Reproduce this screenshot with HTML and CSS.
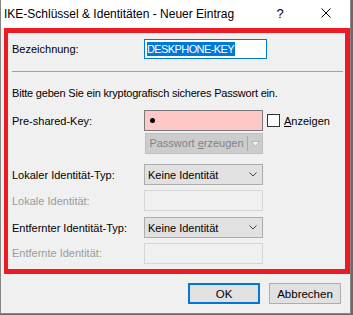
FILE: index.html
```html
<!DOCTYPE html>
<html lang="de">
<head>
    <meta charset="UTF-8">
    <title>IKE-Schlüssel &amp; Identitäten - Neuer Eintrag</title>
    <link rel="stylesheet" href="styles.css">
</head>
<body>
    <div class="window">
        <div class="titlebar">
            <span class="title">IKE-Schlüssel &amp; Identitäten - Neuer Eintrag</span>
            <span class="caption-btn help">?</span>
            <span class="caption-btn close">
                <svg width="10" height="10" viewBox="0 0 10 10"><path d="M0.5 0.5 L9.5 9.5 M9.5 0.5 L0.5 9.5" stroke="#000" stroke-width="1" fill="none"/></svg>
            </span>
        </div>
        <div class="client">
            <div class="frame">
                <div class="row row-name">
                    <span class="label">Bezeichnung:</span>
                    <div class="edit edit-focus"><span class="selected">DESKPHONE-KEY</span></div>
                </div>
                <div class="separator"></div>
                <p class="hint">Bitte geben Sie ein kryptografisch sicheres Passwort ein.</p>
                <div class="row row-key">
                    <span class="label">Pre-shared-Key:</span>
                    <div class="edit edit-pink"><span class="dot"></span></div>
                    <span class="checkbox"></span>
                    <span class="check-label"><u>A</u>nzeigen</span>
                </div>
                <div class="row row-gen">
                    <span class="label"></span>
                    <div class="split-btn">
                        <span class="split-text">Passwort <u>e</u>rzeugen</span>
                        <span class="split-arrow">
                            <svg width="9" height="6" viewBox="0 0 9 6"><path d="M0.5 0.5 L8.5 0.5 L4.5 5.5 Z" fill="#f2f2f2" stroke="#b8b8b8" stroke-width="1"/></svg>
                        </span>
                    </div>
                </div>
                <div class="row row-combo">
                    <span class="label">Lokaler Identität-Typ:</span>
                    <div class="combo">
                        <span>Keine Identität</span>
                        <svg width="8" height="5" viewBox="0 0 8 5"><path d="M0.5 0.5 L4 4 L7.5 0.5" stroke="#444" stroke-width="1" fill="none"/></svg>
                    </div>
                </div>
                <div class="row row-disabled">
                    <span class="label disabled">Lokale Identität:</span>
                    <div class="edit edit-disabled"></div>
                </div>
                <div class="row row-combo">
                    <span class="label">Entfernter Identität-Typ:</span>
                    <div class="combo">
                        <span>Keine Identität</span>
                        <svg width="8" height="5" viewBox="0 0 8 5"><path d="M0.5 0.5 L4 4 L7.5 0.5" stroke="#444" stroke-width="1" fill="none"/></svg>
                    </div>
                </div>
                <div class="row row-disabled row-last">
                    <span class="label disabled">Entfernte Identität:</span>
                    <div class="edit edit-disabled"></div>
                </div>
            </div>
            <div class="buttons">
                <button class="button button-default">OK</button>
                <button class="button">Abbrechen</button>
            </div>
        </div>
    </div>
</body>
</html>
```

FILE: styles.css
```css
body {
    margin: 0;
    padding: 0;
    background-color: #6b6b6b;
    font-family: "Liberation Sans", Arial, sans-serif;
    font-size: 11px;
    color: #000;
}

.window {
    width: 349px;
    height: 313px;
    border: 1px solid #858585;
    border-top: none;
    background-color: #f0f0f0;
    display: flex;
    flex-direction: column;
}

.titlebar {
    height: 28px;
    background-color: #fff;
    display: flex;
    align-items: center;
}

.title {
    flex: 1;
    padding-left: 3px;
    font-size: 12px;
    padding-bottom: 1px;
}

.caption-btn {
    display: flex;
    justify-content: center;
    align-items: center;
    height: 28px;
}

.help {
    width: 46px;
    font-size: 13px;
    padding-bottom: 2px;
    box-sizing: border-box;
}

.close {
    width: 45px;
    margin-right: 2px;
    padding-bottom: 3px;
    box-sizing: border-box;
}

.client {
    flex: 1;
    display: flex;
    flex-direction: column;
}

/* red annotation frame */
.frame {
    margin-left: 3px;
    width: 333px;
    height: 235px;
    border: 5px solid #ed1c24;
    border-left-width: 4px;
    display: flex;
    flex-direction: column;
    padding-left: 4px;
    padding-top: 1px;
}

.row {
    display: flex;
    align-items: center;
}

.label {
    width: 132px;
    flex-shrink: 0;
    white-space: nowrap;
}

.label.disabled {
    color: #9b9b9b;
}

.row-name {
    margin-top: 5px;
}

.edit {
    box-sizing: border-box;
    width: 119px;
    height: 20px;
    border: 1px solid #7a7a7a;
    background-color: #fff;
    display: flex;
    align-items: center;
}

.edit-focus {
    width: 123px;
    border-color: #0078d7;
    padding-left: 2px;
}

.selected {
    background-color: #0078d7;
    color: #fff;
    font-size: 11px;
    letter-spacing: -0.6px;
    line-height: 14px;
    padding-right: 1px;
}

.separator {
    height: 1px;
    background-color: #a0a0a0;
    margin: 12px 2px 0 0;
}

.hint {
    margin: 14px 0 0;
    line-height: 14px;
    letter-spacing: -0.2px;
}

.row-key {
    margin-top: 10px;
}

.edit-pink {
    height: 21px;
    background-color: #ffc8c8;
    padding-left: 5px;
}

.dot {
    width: 5px;
    height: 5px;
    border-radius: 50%;
    background-color: #000;
}

.checkbox {
    width: 11px;
    height: 11px;
    border: 1px solid #333;
    background-color: #fff;
    margin-left: 4px;
}

.check-label {
    margin-left: 4px;
}

.row-gen {
    margin-top: 2px;
}

.split-btn {
    box-sizing: border-box;
    width: 118px;
    height: 21px;
    margin-left: 1px;
    background-color: #cccccc;
    border: 1px solid #bfbfbf;
    color: #838383;
    display: flex;
    align-items: center;
}

.split-text {
    flex: 1;
    text-align: center;
    white-space: nowrap;
    border-right: 1px solid #a8a8a8;
    line-height: 15px;
}

.split-arrow {
    width: 14px;
    display: flex;
    justify-content: center;
}

.row-combo {
    margin-top: 10px;
}

.row-combo + .row-disabled {
    margin-top: 5px;
}

.row-disabled + .row-combo {
    margin-top: 6px;
}

.combo {
    box-sizing: border-box;
    width: 119px;
    height: 21px;
    background-color: #e1e1e1;
    border: 1px solid #adadad;
    display: flex;
    align-items: center;
    justify-content: space-between;
    padding: 0 5px 0 3px;
}

.edit-disabled {
    height: 21px;
    background-color: #f0f0f0;
    border-color: #d6d6d6;
}

.row-last {
    height: 20px;
}

.buttons {
    display: flex;
    justify-content: flex-end;
    gap: 9px;
    margin-top: 9px;
    padding-right: 9px;
}

.button {
    box-sizing: border-box;
    width: 72px;
    height: 21px;
    font-family: "Liberation Sans", Arial, sans-serif;
    font-size: 11.5px;
    background-color: #e1e1e1;
    border: 1px solid #adadad;
    padding: 0;
    color: #000;
}

.button-default {
    border: 2px solid #0078d7;
}
```
